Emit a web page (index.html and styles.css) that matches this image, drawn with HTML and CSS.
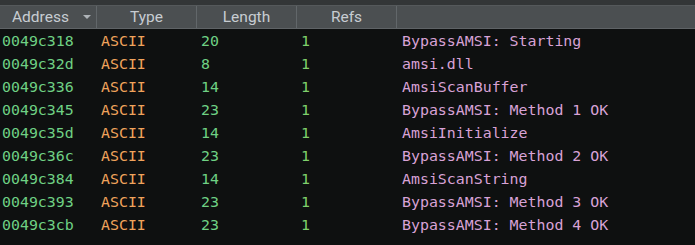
FILE: index.html
```html
<!DOCTYPE html>
<html>
<head>
<meta charset="utf-8">
<link rel="stylesheet" href="styles.css">
</head>
<body>
<div class="topbar"></div>
<div class="table">
  <div class="header">
    <div class="hcell c-addr"><span class="hlabel">Address</span><span class="sort"></span></div>
    <div class="hcell c-type"><span class="hlabel">Type</span></div>
    <div class="hcell c-len"><span class="hlabel">Length</span></div>
    <div class="hcell c-refs"><span class="hlabel">Refs</span></div>
    <div class="hcell c-str"></div>
  </div>
  <div class="rows">
    <div class="row"><span class="addr">0049c318</span><span class="type">ASCII</span><span class="len">20</span><span class="refs">1</span><span class="str">BypassAMSI: Starting</span></div>
    <div class="row"><span class="addr">0049c32d</span><span class="type">ASCII</span><span class="len">8</span><span class="refs">1</span><span class="str">amsi.dll</span></div>
    <div class="row"><span class="addr">0049c336</span><span class="type">ASCII</span><span class="len">14</span><span class="refs">1</span><span class="str">AmsiScanBuffer</span></div>
    <div class="row"><span class="addr">0049c345</span><span class="type">ASCII</span><span class="len">23</span><span class="refs">1</span><span class="str">BypassAMSI: Method 1 OK</span></div>
    <div class="row"><span class="addr">0049c35d</span><span class="type">ASCII</span><span class="len">14</span><span class="refs">1</span><span class="str">AmsiInitialize</span></div>
    <div class="row"><span class="addr">0049c36c</span><span class="type">ASCII</span><span class="len">23</span><span class="refs">1</span><span class="str">BypassAMSI: Method 2 OK</span></div>
    <div class="row"><span class="addr">0049c384</span><span class="type">ASCII</span><span class="len">14</span><span class="refs">1</span><span class="str">AmsiScanString</span></div>
    <div class="row"><span class="addr">0049c393</span><span class="type">ASCII</span><span class="len">23</span><span class="refs">1</span><span class="str">BypassAMSI: Method 3 OK</span></div>
    <div class="row"><span class="addr">0049c3cb</span><span class="type">ASCII</span><span class="len">23</span><span class="refs">1</span><span class="str">BypassAMSI: Method 4 OK</span></div>
  </div>
</div>
</body>
</html>
```
FILE: styles.css
```css
html, body {
  margin: 0;
  padding: 0;
  background: #0e1010;
  width: 695px;
  height: 245px;
  overflow: hidden;
}
.topbar {
  height: 5px;
  background: #333637;
  border-bottom: 1px solid #55595b;
}
.header {
  display: grid;
  grid-template-columns: 97px 100px 100px 100px 1fr;
  height: 22px;
  background: #4b4f51;
  border-bottom: 1px solid #5f6366;
  font-family: Roboto, "Noto Sans", sans-serif;
  font-size: 15.5px;
  color: #c7ccd1;
}
.hcell {
  display: flex;
  align-items: center;
  justify-content: center;
  border-right: 1px solid #62676a;
  position: relative;
}
.hcell.c-str { border-right: none; }
.c-addr { justify-content: flex-start; padding-left: 12px; }
.sort {
  position: absolute;
  right: 5px;
  top: 9px;
  width: 0;
  height: 0;
  border-left: 4px solid transparent;
  border-right: 4px solid transparent;
  border-top: 4px solid #aeb3b7;
}
.rows {
  font-family: "DejaVu Sans Mono", "Liberation Mono", monospace;
  font-size: 14.9px;
}
.row {
  display: grid;
  grid-template-columns: 101px 100px 100px 101px 1fr;
  height: 23px;
  align-items: center;
  white-space: pre;
}
.addr { padding-left: 2px; color: #6fd184; }
.type { color: #f0a35c; }
.len { color: #6fd184; }
.refs { color: #7fd06c; }
.str { color: #d8a2d6; }
```
